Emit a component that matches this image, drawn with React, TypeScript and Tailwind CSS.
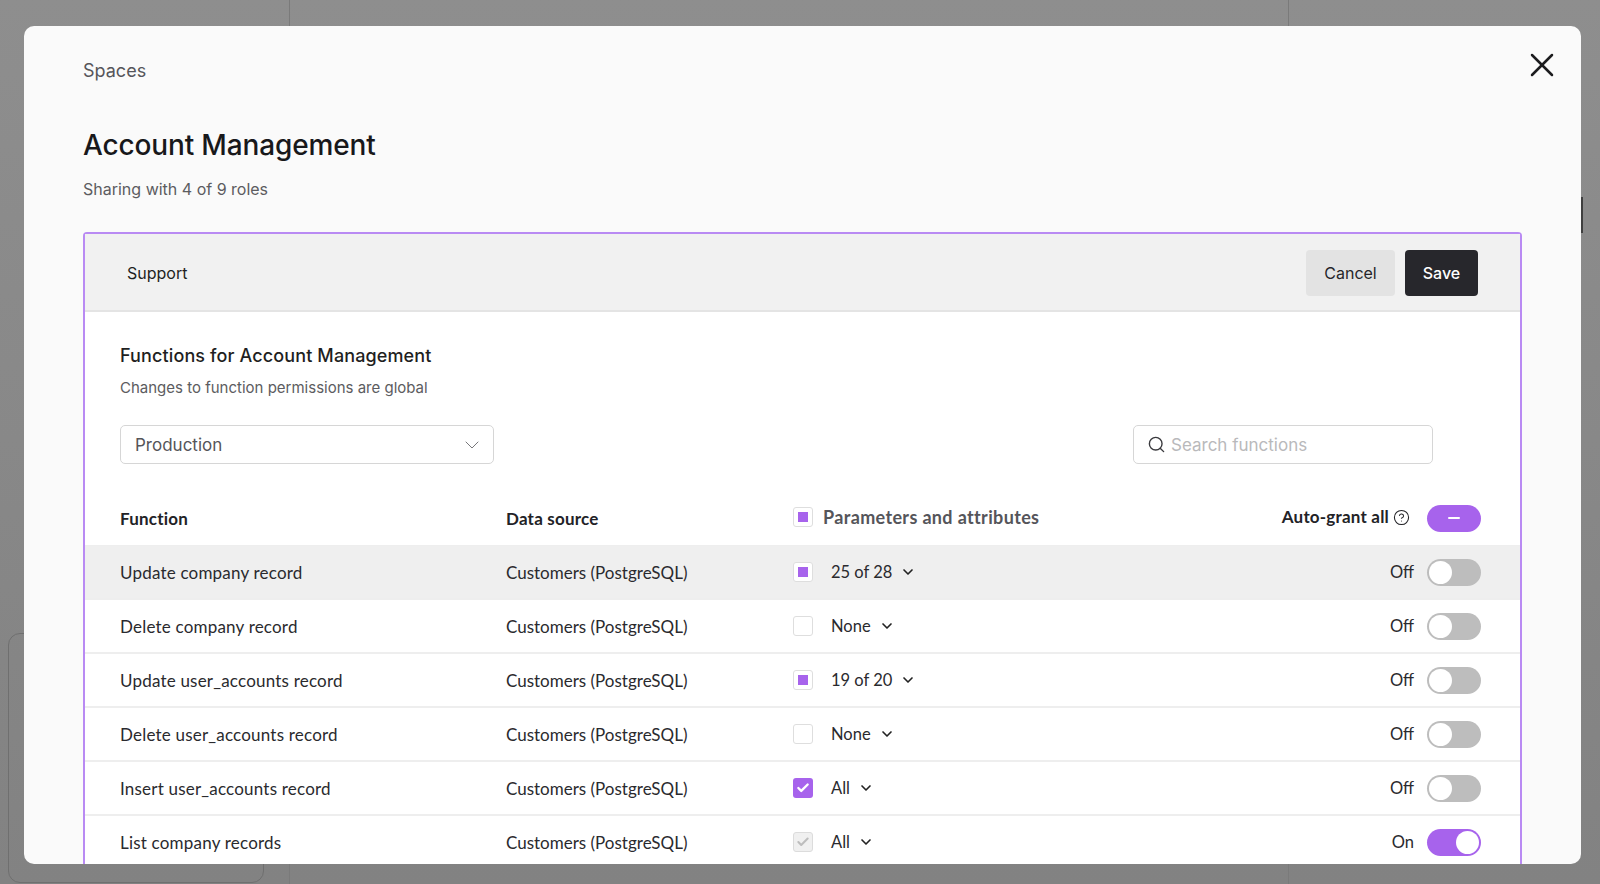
import { Check, ChevronDown, CircleHelp, Search, X } from "lucide-react";

type Perm = "some" | "none" | "all" | "locked";

type Fn = {
  name: string;
  perm: Perm;
  label: string;
  on?: boolean;
  active?: boolean;
};

const functions: Fn[] = [
  { name: "Update company record", perm: "some", label: "25 of 28", active: true },
  { name: "Delete company record", perm: "none", label: "None" },
  { name: "Update user_accounts record", perm: "some", label: "19 of 20" },
  { name: "Delete user_accounts record", perm: "none", label: "None" },
  { name: "Insert user_accounts record", perm: "all", label: "All" },
  { name: "List company records", perm: "locked", label: "All", on: true },
];

function PermBox({ perm }: { perm: Perm }) {
  if (perm === "all") {
    return (
      <span className="flex h-5 w-5 items-center justify-center rounded-[3px] bg-[#a763ec]">
        <Check size={14} strokeWidth={4} className="text-white" />
      </span>
    );
  }
  if (perm === "locked") {
    return (
      <span className="flex h-5 w-5 items-center justify-center rounded-[3px] border border-[#dcdcdc] bg-[#f0f0f0]">
        <Check size={14} strokeWidth={3.5} className="text-[#bdbdbd]" />
      </span>
    );
  }
  return (
    <span className="flex h-5 w-5 items-center justify-center rounded-[3px] border border-[#dedede] bg-white">
      {perm === "some" && <span className="h-[10px] w-[10px] bg-[#a763ec]" />}
    </span>
  );
}

function Toggle({ on }: { on?: boolean }) {
  return (
    <span
      className={`flex h-[27px] w-[54px] items-center rounded-full px-[2px] ${
        on ? "justify-end bg-[#a763ec]" : "justify-start bg-[#bdbdbd]"
      }`}
    >
      <span className="h-[23px] w-[23px] rounded-full bg-white" />
    </span>
  );
}

function FunctionRow({ fn }: { fn: Fn }) {
  return (
    <div
      className={`grid h-[54px] shrink-0 grid-cols-[386px_287px_1fr_auto] items-center border-b-2 border-[#eeeeee] pl-[35px] pr-[39px] text-[#2a2a2e] ${
        fn.active ? "bg-[#efefef]" : "bg-white"
      }`}
    >
      <span className="pt-[2px] text-[17px] tracking-[0.2px]">{fn.name}</span>
      <span className="pt-[2px] text-[17px]">Customers (PostgreSQL)</span>
      <div className="flex items-center">
        <PermBox perm={fn.perm} />
        <span className="ml-[18px] text-[16.5px]">{fn.label}</span>
        <ChevronDown size={16} strokeWidth={2.5} className="ml-[8px] text-[#222222]" />
      </div>
      <div className="flex items-center">
        <span className="mr-[13px] text-[16.5px]">{fn.on ? "On" : "Off"}</span>
        <Toggle on={fn.on} />
      </div>
    </div>
  );
}

export default function App() {
  return (
    <div className="relative h-[884px] w-[1600px] overflow-hidden bg-gradient-to-b from-[#8e8e8e] to-[#828282] font-['Inter',sans-serif]">
      {/* dimmed page behind the dialog */}
      <div className="flex h-full">
        <div className="flex h-full w-[290px] flex-col justify-end border-r border-[#7a7a7a] pb-[1px] pl-2 pr-[25px]">
          <div className="h-[250px] rounded-xl border border-[#6f6f6f]" />
        </div>
        <div className="h-full w-[999px] border-r border-[#7a7a7a]" />
      </div>

      <div className="absolute left-[24px] top-[26px] flex h-[838px] w-[1557px] flex-col overflow-hidden rounded-[10px] bg-[#fafafa] px-[59px] pt-[33px]">
        <button className="absolute right-[19px] top-[19px] text-[#1c1c1e]">
          <X size={40} strokeWidth={1.5} />
        </button>

        <p className="text-[18px] leading-6 text-[#55555a]">Spaces</p>
        <h1 className="mt-[44px] text-[28px] font-medium leading-9 tracking-[-0.15px] text-[#18181b]">Account Management</h1>
        <p className="mt-[14px] text-[16px] leading-6 text-[#5c5c60]">Sharing with 4 of 9 roles</p>

        <section className="mt-[31px] flex min-h-0 flex-1 flex-col rounded-t-[4px] border-x-2 border-t-2 border-[#b98af3] bg-white">
          <div className="flex h-[78px] shrink-0 items-center justify-between border-b-2 border-[#e4e4e4] bg-[#f1f1f1] px-[42px] pt-[2px]">
            <span className="text-[16px] text-[#1f1f22]">Support</span>
            <div className="flex gap-[10px]">
              <button className="h-[46px] w-[89px] rounded-[4px] bg-[#e3e3e3] text-[16px] text-[#26262a]">Cancel</button>
              <button className="h-[46px] w-[73px] rounded-[4px] bg-[#27272c] text-[16px] font-medium text-white">Save</button>
            </div>
          </div>

          <div className="pl-[35px] pr-[36px] pt-[32px]">
            <h2 className="text-[18px] font-medium leading-6 tracking-[0.12px] text-[#1f1f22]">Functions for Account Management</h2>
            <p className="mt-[10px] text-[15px] leading-5 text-[#5c5c60]">Changes to function permissions are global</p>
            <div className="mt-[27px] flex items-center justify-between pr-[51px]">
              <div className="flex h-[39px] w-[374px] items-center justify-between rounded-[5px] border border-[#d6d6d6] pl-[14px] pr-[9px]">
                <span className="pt-[2px] text-[17px] text-[#55555a]">Production</span>
                <ChevronDown size={24} strokeWidth={1} className="text-[#77777a]" />
              </div>
              <div className="flex h-[39px] w-[300px] items-center rounded-[5px] border border-[#d6d6d6] pl-[13px]">
                <Search size={19} strokeWidth={1.75} className="text-[#3a3a3e]" />
                <span className="ml-[5px] pt-[2px] text-[17px] text-[#b9b9bb]">Search functions</span>
              </div>
            </div>
          </div>

          <div className="mt-[27px] grid h-[55px] shrink-0 grid-cols-[386px_287px_1fr_auto] items-center border-b border-[#eeeeee] pl-[35px] pr-[39px] font-['Lato',sans-serif] text-[17px] font-bold tracking-[0.2px] text-[#222226]">
            <span className="pt-[2px]">Function</span>
            <span className="pt-[2px]">Data source</span>
            <div className="flex items-center pb-[2px]">
              <PermBox perm="some" />
              <span className="ml-[10px] text-[18px] tracking-[0.35px] text-[#55555a]">Parameters and attributes</span>
            </div>
            <div className="flex items-center">
              <span className="mb-[2px]">Auto-grant all</span>
              <CircleHelp size={17} strokeWidth={1.5} className="mb-[2px] ml-[4px]" />
              <span className="ml-[17px] flex h-[27px] w-[54px] items-center justify-center rounded-full bg-[#a763ec]">
                <span className="h-[2.5px] w-[12px] rounded-full bg-white" />
              </span>
            </div>
          </div>

          <div className="flex flex-col font-['Lato',sans-serif]">
            {functions.map((fn) => (
              <FunctionRow key={fn.name} fn={fn} />
            ))}
          </div>
        </section>
      </div>

      {/* edge of the page's scrollbar, sticks out past the dialog */}
      <div className="absolute left-[1581px] top-[197px] h-[36px] w-[2px] bg-[#3f3f3f]" />
    </div>
  );
}
